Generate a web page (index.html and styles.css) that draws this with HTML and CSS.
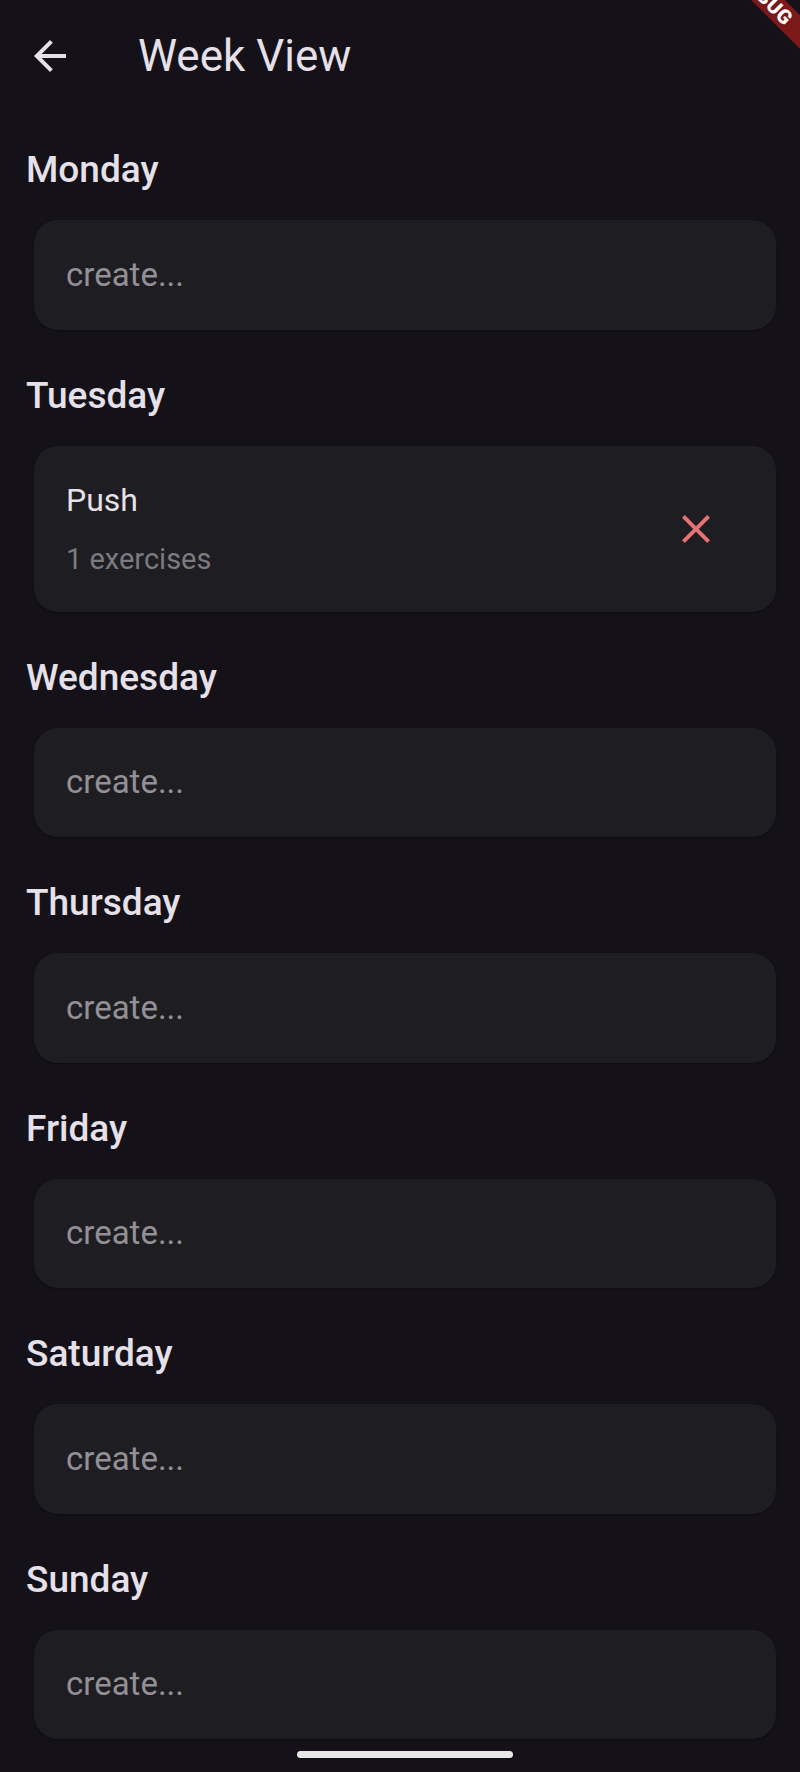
FILE: index.html
```html
<!DOCTYPE html>
<html lang="en">
<head>
<meta charset="utf-8">
<title>Week View</title>
<link rel="stylesheet" href="styles.css">
</head>
<body>
<div class="screen">
  <header class="appbar">
    <button class="icon-btn back" aria-label="Back">
      <svg viewBox="0 0 24 24" width="48" height="48"><path d="M20 11H7.830l5.590-5.590L12 4l-8 8 8 8 1.410-1.410L7.830 13H20v-2z" fill="currentColor"/></svg>
    </button>
    <h1 class="title">Week View</h1>
  </header>

  <main class="days">
    <section class="day">
      <h2 class="day-name">Monday</h2>
      <div class="card empty"><span class="hint">create...</span></div>
    </section>
    <section class="day">
      <h2 class="day-name">Tuesday</h2>
      <div class="card filled">
        <div class="info">
          <div class="workout">Push</div>
          <div class="count">1 exercises</div>
        </div>
        <button class="icon-btn remove" aria-label="Remove">
          <svg viewBox="0 0 24 24" width="48" height="48"><path d="M19 6.41L17.59 5 12 10.59 6.41 5 5 6.41 10.59 12 5 17.59 6.41 19 12 13.41 17.59 19 19 17.59 13.41 12z" fill="currentColor"/></svg>
        </button>
      </div>
    </section>
    <section class="day">
      <h2 class="day-name">Wednesday</h2>
      <div class="card empty"><span class="hint">create...</span></div>
    </section>
    <section class="day">
      <h2 class="day-name">Thursday</h2>
      <div class="card empty"><span class="hint">create...</span></div>
    </section>
    <section class="day">
      <h2 class="day-name">Friday</h2>
      <div class="card empty"><span class="hint">create...</span></div>
    </section>
    <section class="day">
      <h2 class="day-name">Saturday</h2>
      <div class="card empty"><span class="hint">create...</span></div>
    </section>
    <section class="day">
      <h2 class="day-name">Sunday</h2>
      <div class="card empty"><span class="hint">create...</span></div>
    </section>
  </main>

  <div class="home-indicator"></div>
  <div class="debug-banner">DEBUG</div>
</div>
</body>
</html>
```

FILE: styles.css
```css
* { box-sizing: border-box; }

html, body {
  margin: 0;
  padding: 0;
  background: #141218;
}

body {
  font-family: Roboto, "Noto Sans", "Liberation Sans", sans-serif;
  color: #e6e0e9;
}

.screen {
  position: relative;
  width: 800px;
  height: 1772px;
  overflow: hidden;
  background: #141218;
}

.appbar {
  display: flex;
  align-items: center;
  height: 112px;
  padding-left: 26px;
}

.icon-btn {
  display: flex;
  align-items: center;
  justify-content: center;
  width: 48px;
  height: 48px;
  padding: 0;
  border: 0;
  background: transparent;
  color: inherit;
}

.back { color: #e6e0e9; }

.title {
  margin: 0 0 0 64px;
  font-size: 44px;
  font-weight: 400;
  line-height: 56px;
  color: #e6e0e9;
}

.days {
  display: flex;
  flex-direction: column;
  gap: 42px;
  padding: 34px 24px 0 26px;
}

.day {
  display: flex;
  flex-direction: column;
  gap: 26px;
}

.day-name {
  margin: 0;
  font-size: 37px;
  font-weight: 500;
  line-height: 48px;
  color: #e6e0e9;
}

.card {
  margin-left: 8px;
  background: #1e1d21;
  border-radius: 24px;
  box-shadow: 0 1px 2px rgba(0, 0, 0, 0.35);
  display: flex;
  align-items: center;
  padding: 0 32px 0 32px;
}

.card.empty {
  height: 109.5px;
}

.hint {
  font-size: 33px;
  line-height: 40px;
  color: #938f96;
}

.card.filled {
  height: 166px;
  justify-content: space-between;
}

.info {
  display: flex;
  flex-direction: column;
  gap: 21px;
}

.workout {
  font-size: 32px;
  line-height: 40px;
  color: #e6e0e9;
}

.count {
  font-size: 29px;
  line-height: 36px;
  color: #7c7a80;
}

.remove {
  width: 96px;
  height: 96px;
  color: #e57373;
}

.home-indicator {
  position: absolute;
  left: 297px;
  top: 1751px;
  width: 216px;
  height: 7px;
  border-radius: 4px;
  background: #e8e8e8;
}

.debug-banner {
  position: absolute;
  left: 686px;
  top: -14px;
  width: 160px;
  height: 24px;
  transform: rotate(45deg);
  background: #7a181a;
  color: #ffffff;
  font-size: 20px;
  font-weight: 900;
  line-height: 24px;
  text-align: center;
  letter-spacing: 0.5px;
}
```
